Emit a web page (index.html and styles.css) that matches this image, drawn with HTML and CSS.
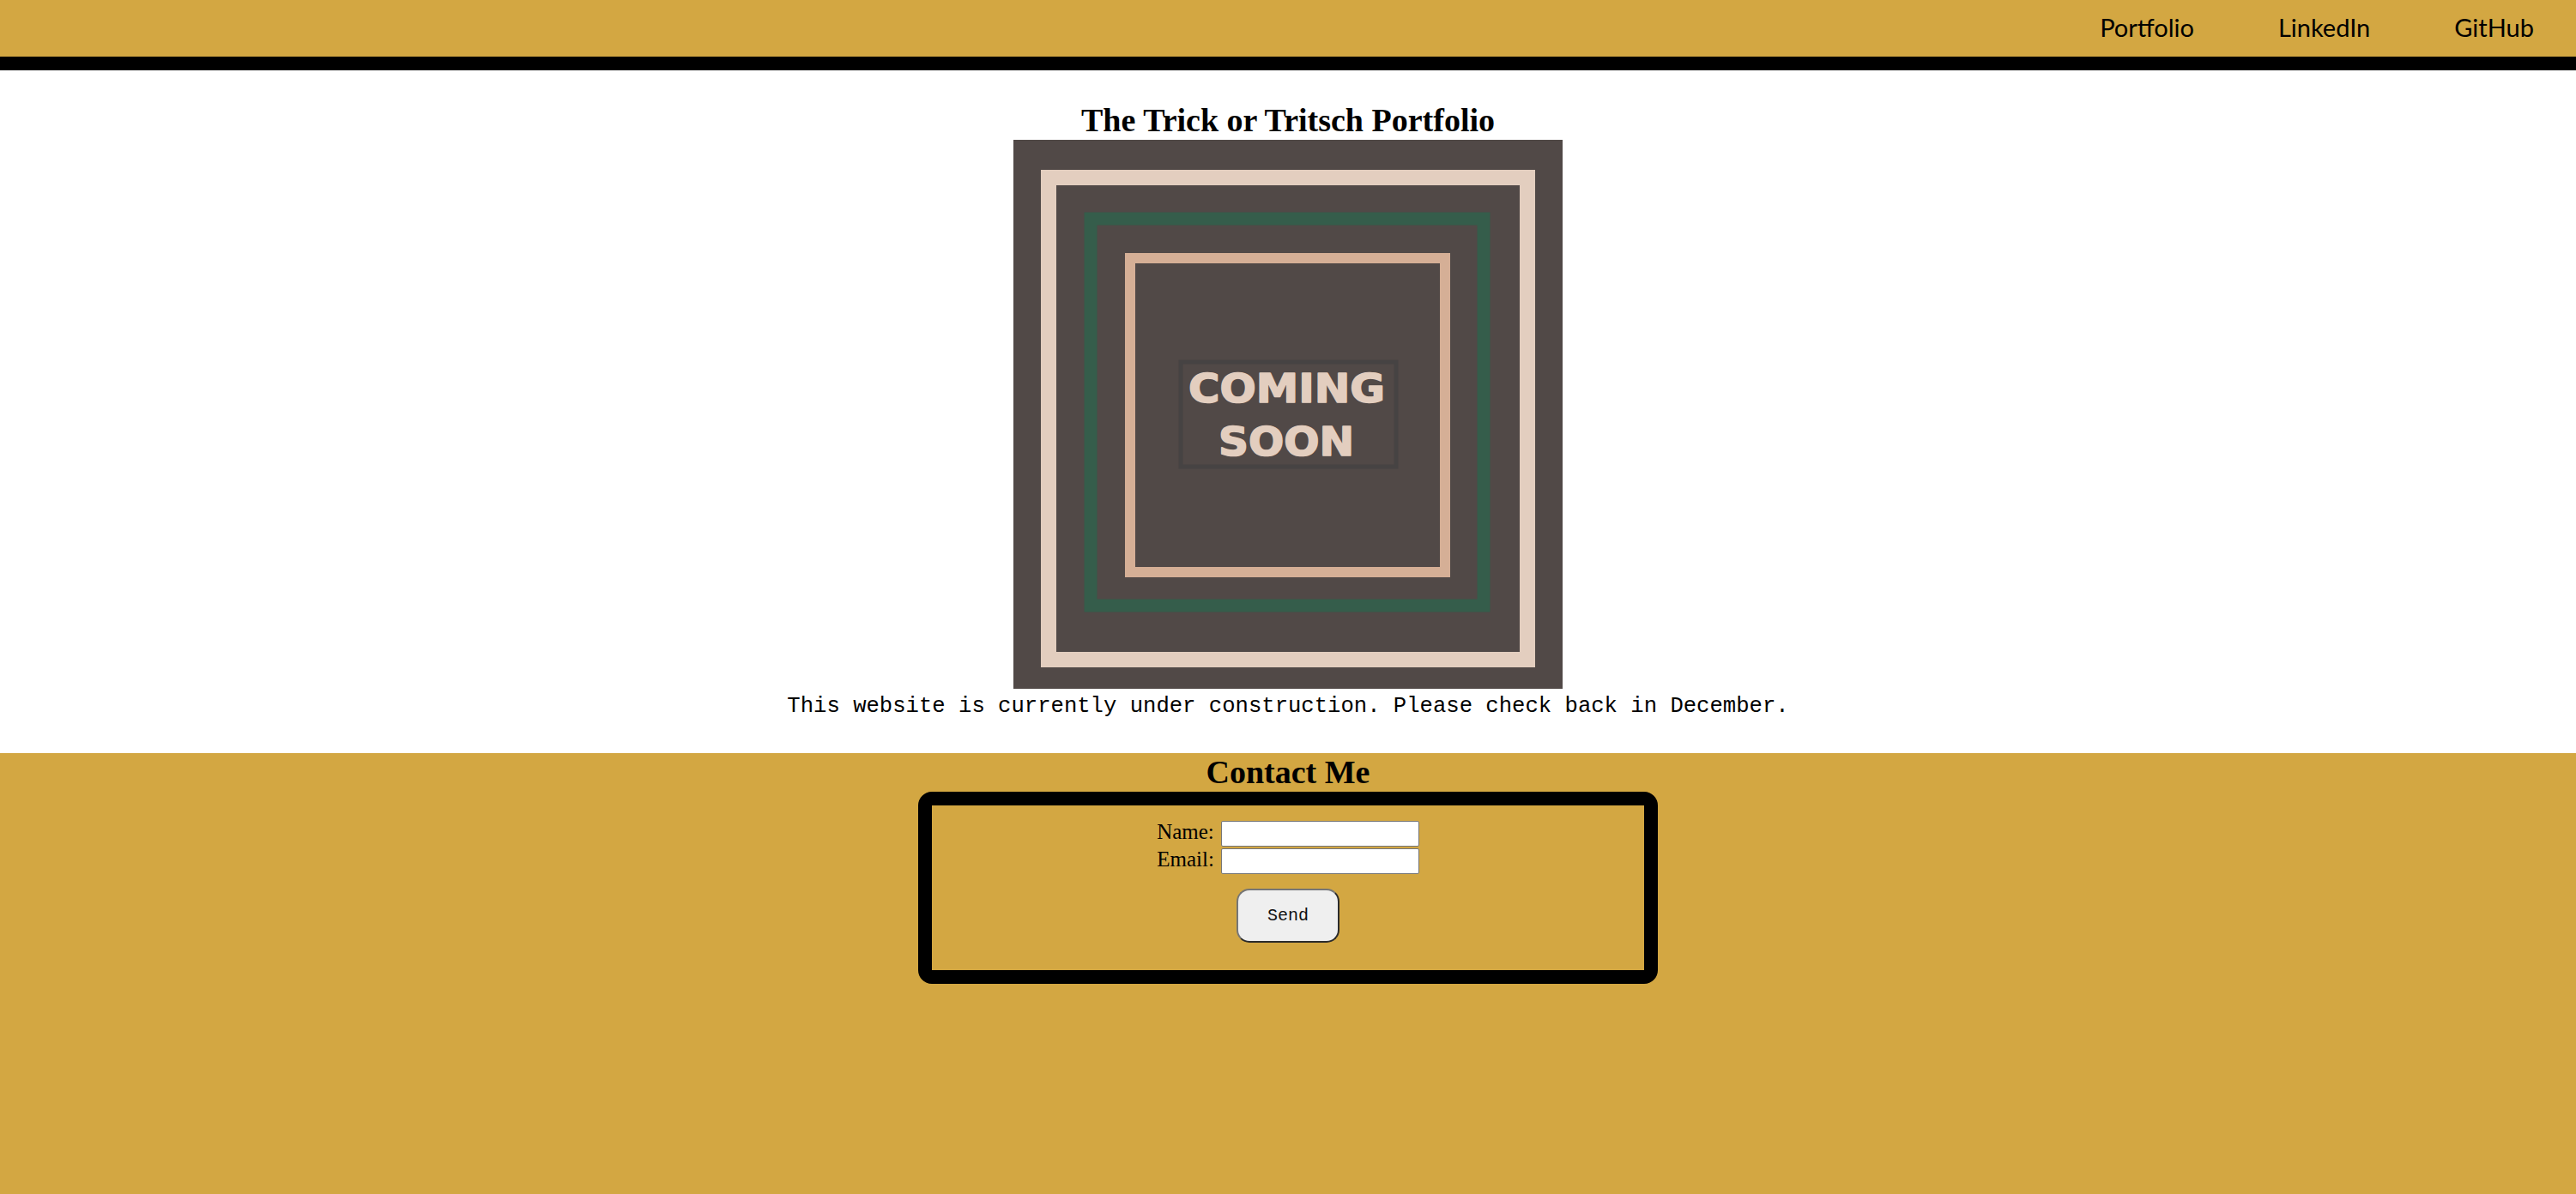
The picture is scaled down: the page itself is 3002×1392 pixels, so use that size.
FILE: index.html
```html
<!DOCTYPE html>
<html lang="en">
<head>
<meta charset="utf-8">
<title>The Trick or Tritsch Portfolio</title>
<link rel="stylesheet" href="styles.css">
</head>
<body>
<nav class="topnav">
  <a class="navlink" href="#">Portfolio</a>
  <a class="navlink" href="#">LinkedIn</a>
  <a class="navlink" href="#">GitHub</a>
</nav>
<main class="intro">
  <h1 class="title">The Trick or Tritsch Portfolio</h1>
  <svg class="coming" width="640" height="640" viewBox="0 0 640 640" xmlns="http://www.w3.org/2000/svg">
    <rect x="0" y="0" width="640" height="640" fill="#514947"/>
    <rect x="41" y="44" width="558" height="562" fill="none" stroke="#e3cebf" stroke-width="18"/>
    <rect x="90" y="92" width="458" height="451" fill="none" stroke="#355d4b" stroke-width="15"/>
    <rect x="136" y="138" width="367" height="366" fill="none" stroke="#d5af96" stroke-width="12"/>
    <rect x="195" y="259" width="251" height="122" fill="none" stroke="#464343" stroke-width="5"/>
    <text x="204" y="306" textLength="229" lengthAdjust="spacingAndGlyphs" class="ctext">COMING</text>
    <text x="239" y="368" textLength="158" lengthAdjust="spacingAndGlyphs" class="ctext">SOON</text>
  </svg>
  <p class="note">This website is currently under construction. Please check back in December.</p>
</main>
<footer class="contact">
  <h2 class="contact-title">Contact Me</h2>
  <form class="contact-box">
    <div class="row"><label class="lbl">Name:</label><input class="field" type="text"></div>
    <div class="row"><label class="lbl">Email:</label><input class="field" type="text"></div>
    <button class="send" type="button">Send</button>
  </form>
</footer>
</body>
</html>
```
FILE: styles.css
```css
html, body {
  margin: 0;
  padding: 0;
}
body {
  min-height: 100vh;
  display: flex;
  flex-direction: column;
  background: #ffffff;
  font-family: "Liberation Serif", "Times New Roman", serif;
  color: #000;
}
.topnav {
  height: 66px;
  border-bottom: 16px solid #000;
  background: #d3a742;
  display: flex;
  justify-content: flex-end;
  align-items: center;
}
.navlink {
  font-family: "Lato", "Open Sans", sans-serif;
  font-size: 29px;
  line-height: 66px;
  padding: 0 49px 2px;
  color: #000;
  text-decoration: none;
}
.intro {
  display: flex;
  flex-direction: column;
  align-items: center;
}
.title {
  margin: 37px 0 0;
  font-size: 38px;
  line-height: 42px;
  font-weight: bold;
}
.coming {
  display: block;
  margin-top: 2px;
}
.ctext {
  font-family: "DejaVu Sans", sans-serif;
  font-weight: bold;
  font-size: 46px;
  fill: #e3cebf;
  stroke: #e3cebf;
  stroke-width: 1.6px;
  stroke-linejoin: round;
}
.note {
  margin: 7px 0 40px;
  font-family: "Liberation Mono", "Courier New", monospace;
  font-size: 25.6px;
  line-height: 28px;
}
.contact {
  flex: 1;
  background: #d3a742;
  padding-top: 1px;
  display: flex;
  flex-direction: column;
  align-items: center;
}
.contact-title {
  margin: 0;
  font-size: 38px;
  line-height: 42px;
  font-weight: bold;
}
.contact-box {
  box-sizing: border-box;
  width: 862px;
  margin-top: 2px;
  border: 16px solid #000;
  border-radius: 16px;
  padding: 18px 0 32px;
  display: flex;
  flex-direction: column;
  align-items: center;
  gap: 2px;
}
.row {
  display: flex;
  align-items: flex-start;
  height: 30px;
}
.lbl {
  font-size: 25px;
  line-height: 25px;
  margin-right: 8px;
}
.field {
  box-sizing: border-box;
  width: 231px;
  height: 30px;
  margin: 0;
  border: 1px solid #767676;
  border-radius: 2px;
  background: #fff;
}
.send {
  box-sizing: border-box;
  width: 120px;
  height: 63px;
  margin-top: 15px;
  border: 2px solid;
  border-color: #767676 #2b2b2b #2b2b2b #767676;
  border-radius: 15px;
  background: #efefef;
  font-family: "Liberation Mono", "Courier New", monospace;
  font-size: 20px;
  color: #111;
  padding: 0;
}
```
